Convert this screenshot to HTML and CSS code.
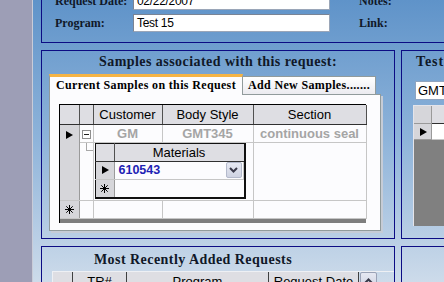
FILE: index.html
```html
<!DOCTYPE html>
<html lang="en">
<head>
    <meta charset="UTF-8">
    <title>Request Details</title>
    <link rel="stylesheet" href="styles.css">
</head>
<body>
    <div class="rail"></div>

    <main class="desk">
        <!-- request header -->
        <section class="panel request">
            <label class="lbl">Request Date:</label>
            <div class="field">02/22/2007</div>
            <span></span>
            <label class="lbl">Notes:</label>

            <label class="lbl">Program:</label>
            <div class="field">Test 15</div>
            <span></span>
            <label class="lbl">Link:</label>
        </section>

        <!-- samples -->
        <section class="panel samples">
            <h2 class="title">Samples associated with this request:</h2>
            <div class="tabs">
                <div class="tabstrip">
                    <div class="tab on">Current Samples on this Request</div>
                    <div class="tab off">Add New Samples.......</div>
                </div>
                <div class="page">
                    <div class="sheet">
                        <table class="grid">
                            <colgroup>
                                <col class="c-sel"><col class="c-exp"><col class="c-cust"><col class="c-body"><col class="c-sect">
                            </colgroup>
                            <tr class="head">
                                <th></th><th></th><th>Customer</th><th>Body Style</th><th>Section</th>
                            </tr>
                            <tr class="rec">
                                <td class="sel top" rowspan="2"><i class="arrow"></i></td>
                                <td class="exp"><span class="minus"></span></td>
                                <td class="dim">GM</td>
                                <td class="dim">GMT345</td>
                                <td class="dim">continuous seal</td>
                            </tr>
                            <tr class="kids">
                                <td class="exp"><span class="branch"></span></td>
                                <td class="nest" colspan="2">
                                    <table class="sub">
                                        <colgroup><col class="c-sel"><col></colgroup>
                                        <tr class="head"><th></th><th>Materials</th></tr>
                                        <tr class="row">
                                            <td class="sel"><i class="arrow"></i></td>
                                            <td class="mat">
                                                <span class="code">610543</span>
                                                <span class="drop">
                                                    <svg width="9" height="6" viewBox="0 0 9 6"><polyline points="1,1 4.5,4.5 8,1" fill="none" stroke="#3a3a4a" stroke-width="2"/></svg>
                                                </span>
                                            </td>
                                        </tr>
                                        <tr class="row">
                                            <td class="sel">
                                                <svg class="star" width="9" height="9" viewBox="0 0 9 9"><g stroke="#000" stroke-width="1"><line x1="4.5" y1="0" x2="4.5" y2="9"/><line x1="0" y1="4.5" x2="9" y2="4.5"/><line x1="1.3" y1="1.3" x2="7.7" y2="7.7"/><line x1="7.7" y1="1.3" x2="1.3" y2="7.7"/></g></svg>
                                            </td>
                                            <td></td>
                                        </tr>
                                    </table>
                                </td>
                                <td></td>
                            </tr>
                            <tr class="rec">
                                <td class="sel">
                                    <svg class="star" width="9" height="9" viewBox="0 0 9 9"><g stroke="#000" stroke-width="1"><line x1="4.5" y1="0" x2="4.5" y2="9"/><line x1="0" y1="4.5" x2="9" y2="4.5"/><line x1="1.3" y1="1.3" x2="7.7" y2="7.7"/><line x1="7.7" y1="1.3" x2="1.3" y2="7.7"/></g></svg>
                                </td>
                                <td></td><td></td><td></td><td></td>
                            </tr>
                        </table>
                        <div class="hscroll"></div>
                    </div>
                </div>
            </div>
        </section>

        <!-- tests -->
        <section class="panel tests">
            <h2 class="title left">Test Results for this sample:</h2>
            <div class="combo">GMT345</div>
            <div class="mini">
                <div class="mini-row head"><span class="sel"></span><span class="cell"></span></div>
                <div class="mini-row"><span class="sel"><i class="arrow"></i></span><span class="cell"></span></div>
                <div class="void"></div>
            </div>
        </section>

        <!-- recent requests -->
        <section class="panel recent">
            <h2 class="title shift">Most Recently Added Requests</h2>
            <div class="list-head">
                <span class="h-sel"></span>
                <span class="h-tr">TR#</span>
                <span class="h-prog">Program</span>
                <span class="h-date">Request Date</span>
                <span class="up">
                    <svg width="9" height="6" viewBox="0 0 9 6"><polyline points="1,5 4.5,1.5 8,5" fill="none" stroke="#3a3a4a" stroke-width="2"/></svg>
                </span>
            </div>
        </section>

        <section class="panel spare"></section>
    </main>
</body>
</html>
```

FILE: styles.css
```css
/* base */
* {
    box-sizing: border-box;
}
body {
    margin: 0;
    height: 282px;
    overflow: hidden;
    display: flex;
    background-color: #9d9eb6;
    font-family: "Liberation Sans", Arial, sans-serif;
}
.rail {
    width: 33px;
    flex: none;
    background-color: #9d9eb6;
    border-right: 1px solid #c9ccd8;
}
.desk {
    flex: 1;
    min-width: 0;
    padding-left: 8px;
    background: linear-gradient(#5f93c9, #8fb4da 50%, #cddbea);
    display: grid;
    grid-template-columns: 354px 300px;
    grid-template-rows: auto 189px auto;
    column-gap: 6px;
    row-gap: 7px;
    align-content: start;
}
.panel {
    border: 1px solid #0c0c84;
}
.title {
    margin: 0;
    height: 20px;
    font: bold 14px/20px "Liberation Serif", "Times New Roman", serif;
    letter-spacing: 0.45px;
    color: #101828;
    text-align: center;
    white-space: nowrap;
}
.title.left {
    text-align: left;
    padding-left: 14px;
    letter-spacing: 0.9px;
}
.title.shift {
    padding-right: 50px;
}

/* request header */
.request {
    grid-column: 1 / -1;
    margin-top: -14px;
    height: 57px;
    padding: 5px 0 0 13px;
    display: grid;
    grid-template-columns: 78px 197px 29px 80px;
    grid-auto-rows: 18px;
    row-gap: 4px;
    align-items: center;
}
.lbl {
    font: bold 12px "Liberation Serif", "Times New Roman", serif;
    color: #101828;
    white-space: nowrap;
}
.field {
    height: 18px;
    background-color: #fff;
    border: 1px solid #9aa6b8;
    border-top-color: #7a8494;
    border-left-color: #7a8494;
    padding-left: 3px;
    font-size: 12px;
    line-height: 16px;
    letter-spacing: -0.3px;
    color: #000;
}

/* tabs */
.samples {
    padding-top: 1px;
}
.tabs {
    margin: 2px 0 0 7px;
    width: 332px;
}
.tabstrip {
    display: flex;
    align-items: flex-end;
    height: 20px;
}
.tab {
    font: bold 12px "Liberation Serif", "Times New Roman", serif;
    letter-spacing: 0.35px;
    color: #000;
    text-align: center;
    white-space: nowrap;
}
.tab.on {
    position: relative;
    z-index: 1;
    width: 194px;
    height: 21px;
    margin-bottom: -1px;
    line-height: 16px;
    background-color: #fcfcfe;
    border: 1px solid #919b9c;
    border-top: 3px solid #f5b445;
    border-bottom: none;
}
.tab.off {
    width: 133px;
    height: 18px;
    line-height: 17px;
    background: linear-gradient(#ffffff, #ebebf0);
    border: 1px solid #919b9c;
    border-left: none;
    border-bottom: none;
}
.page {
    height: 137px;
    padding: 9px 0 0 9px;
    background-color: #fcfcfe;
    border: 1px solid #919b9c;
    box-shadow: 2px 2px 0 #c6ccd6;
}

/* datasheet */
.sheet {
    width: 307px;
    border-left: 1px solid #000;
    border-top: 1px solid #000;
}
.grid, .sub {
    border-collapse: collapse;
    table-layout: fixed;
}
.grid {
    width: 306px;
}
.c-sel { width: 19px; }
.c-exp { width: 14px; }
.c-cust { width: 69px; }
.c-body { width: 91px; }
.c-sect { width: 113px; }
.grid th, .sub th {
    height: 19px;
    padding: 0;
    background-color: #dedee3;
    border-right: 1px solid #505050;
    border-bottom: 1px solid #303030;
    font: normal 13px "Liberation Sans", Arial, sans-serif;
    color: #000;
}
.grid td, .sub td {
    height: 18px;
    padding: 0;
    border-right: 1px solid #c6c6c6;
    border-bottom: 1px solid #c6c6c6;
}
.grid td.sel, .sub td.sel {
    background-color: #d6d6da;
    border-right-color: #9a9a9a;
    vertical-align: middle;
}
.grid td.sel.top {
    vertical-align: top;
    padding-top: 6px;
}
.dim {
    text-align: center;
    font-weight: bold;
    font-size: 13px;
    color: #a5a5a5;
}
.arrow {
    display: block;
    width: 0;
    height: 0;
    margin-left: 6px;
    border-left: 7px solid #000;
    border-top: 4px solid transparent;
    border-bottom: 4px solid transparent;
}
.star {
    display: block;
    margin: 0 auto;
}
.exp {
    vertical-align: top;
}
.minus {
    display: block;
    position: relative;
    width: 9px;
    height: 9px;
    margin: 5px 0 0 2px;
    border: 1px solid #8e8e8e;
    background-color: #fff;
}
.minus::after {
    content: "";
    position: absolute;
    left: 1px;
    top: 3px;
    width: 5px;
    height: 1px;
    background-color: #202020;
}
.branch {
    display: block;
    width: 7px;
    height: 8px;
    margin-left: 6px;
    border-left: 1px solid #a8a8a8;
    border-bottom: 1px solid #a8a8a8;
}
.nest {
    padding: 0 8px 1px 1px !important;
    vertical-align: top;
}
.sub {
    width: 151px;
    border: 2px solid #111;
    border-top-width: 1px;
    border-left-width: 1px;
}
.sub th {
    height: 18px;
}
.mat {
    display: flex;
    align-items: center;
    justify-content: space-between;
    padding: 0 1px 0 4px !important;
}
.code {
    font-weight: bold;
    font-size: 12.5px;
    color: #1e22b4;
}
.drop, .up {
    width: 16px;
    height: 16px;
    display: flex;
    align-items: center;
    justify-content: center;
    background: linear-gradient(#e6e8f2, #cfd3e2);
    border: 1px solid #b4bacc;
    border-radius: 2px;
}
.hscroll {
    height: 4px;
    background-color: #7e7e7e;
}

/* tests */
.tests {
    padding-top: 1px;
}
.combo {
    margin: 9px 0 0 13px;
    width: 220px;
    height: 19px;
    padding-left: 2px;
    background-color: #fff;
    border: 1px solid #8fa4bf;
    font-size: 13px;
    line-height: 17px;
    color: #000;
}
.mini {
    margin: 5px 0 0 11px;
    border-top: 1px solid #e4e4ea;
    border-left: 1px solid #e4e4ea;
}
.mini-row {
    display: flex;
    height: 16px;
}
.mini-row.head {
    height: 18px;
}
.mini-row .sel {
    width: 18px;
    display: flex;
    align-items: center;
    background-color: #d6d6da;
    border-right: 1px solid #9a9a9a;
    border-bottom: 1px solid #9a9a9a;
}
.mini-row .cell {
    flex: 1;
    background-color: #fff;
    border-bottom: 1px solid #c6c6c6;
}
.mini-row.head .cell {
    background-color: #dedee3;
    border-bottom-color: #303030;
}
.void {
    height: 86px;
    background-color: #808080;
}

/* recent */
.recent {
    padding-top: 3px;
}
.list-head {
    display: flex;
    margin: 1px 0 0 10px;
    height: 20px;
    border-top: 1px solid #eef0f4;
    border-left: 1px solid #eef0f4;
    font-size: 13px;
    line-height: 19px;
    color: #000;
}
.list-head > span {
    background-color: #dedee3;
    border-right: 1px solid #404040;
    text-align: center;
}
.h-sel { width: 20px; }
.h-tr { width: 54px; }
.h-prog { width: 142px; }
.h-date { width: 90px; }
.list-head > .up {
    width: 17px;
    height: 17px;
    margin-left: 1px;
    border: 1px solid #9aa2b6;
}
```
